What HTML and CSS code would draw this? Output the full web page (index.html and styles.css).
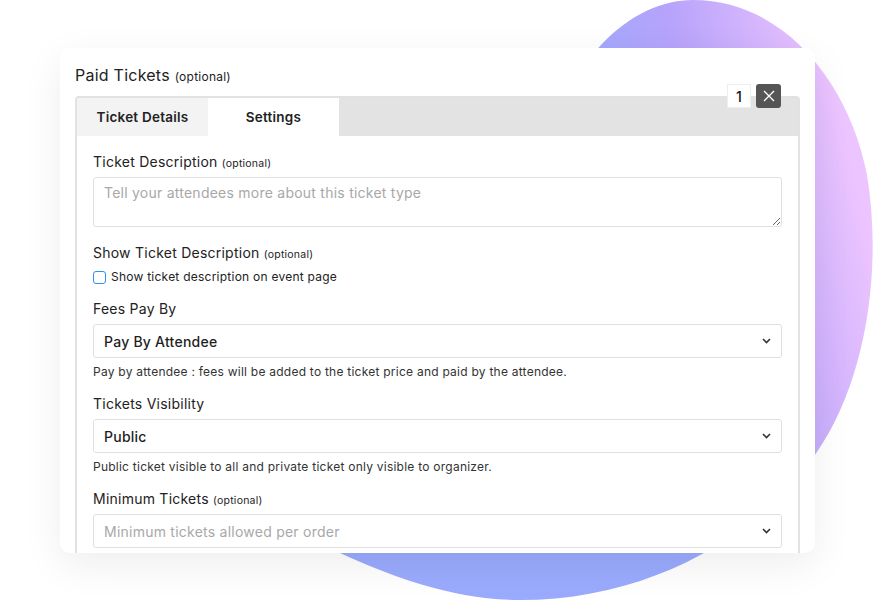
FILE: index.html
```html
<!DOCTYPE html>
<html lang="en">
<head>
    <meta charset="UTF-8">
    <meta name="viewport" content="width=device-width, initial-scale=1.0">
    <title>Paid Tickets</title>
    <link rel="stylesheet" href="styles.css">
</head>
<body>
    <svg class="blob" width="875" height="600" viewBox="0 0 875 600">
        <defs>
            <linearGradient id="blobFill" x1="620" y1="320" x2="875" y2="260" gradientUnits="userSpaceOnUse">
                <stop offset="0" stop-color="#9aaafd"/>
                <stop offset="0.45" stop-color="#b7a3fb"/>
                <stop offset="1" stop-color="#ecc4ff"/>
            </linearGradient>
        </defs>
        <path fill="url(#blobFill)" d="M693,0 C785,0 850,85 867,175 C882,265 868,380 815,455 C760,535 650,600 520,600 C455,600 395,578 340,553 L560,120 C575,60 630,0 693,0 Z"/>
    </svg>

    <div class="card">
        <h2 class="card-title">Paid Tickets <small>(optional)</small></h2>

        <div class="panel">
            <div class="panel-actions">
                <span class="count">1</span>
                <button class="close" type="button">
                    <svg width="12" height="12" viewBox="0 0 12 12"><path d="M1 1L11 11M11 1L1 11" stroke="#fff" stroke-width="1.4"/></svg>
                </button>
            </div>

            <div class="tabs">
                <div class="tab">Ticket Details</div>
                <div class="tab active">Settings</div>
            </div>

            <div class="panel-body">
                <div class="field">
                    <label>Ticket Description <small>(optional)</small></label>
                    <textarea class="control" placeholder="Tell your attendees more about this ticket type"></textarea>
                </div>

                <div class="field">
                    <label>Show Ticket Description <small>(optional)</small></label>
                    <div class="check-row">
                        <span class="checkbox"></span>
                        <span>Show ticket description on event page</span>
                    </div>
                </div>

                <div class="field">
                    <label>Fees Pay By</label>
                    <div class="control select">
                        <span>Pay By Attendee</span>
                        <svg width="9" height="6" viewBox="0 0 9 6"><path d="M1 1L4.5 4.5L8 1" fill="none" stroke="#333" stroke-width="1.6"/></svg>
                    </div>
                    <p class="help">Pay by attendee : fees will be added to the ticket price and paid by the attendee.</p>
                </div>

                <div class="field">
                    <label>Tickets Visibility</label>
                    <div class="control select">
                        <span>Public</span>
                        <svg width="9" height="6" viewBox="0 0 9 6"><path d="M1 1L4.5 4.5L8 1" fill="none" stroke="#333" stroke-width="1.6"/></svg>
                    </div>
                    <p class="help">Public ticket visible to all and private ticket only visible to organizer.</p>
                </div>

                <div class="field">
                    <label>Minimum Tickets <small>(optional)</small></label>
                    <div class="control select">
                        <span class="placeholder">Minimum tickets allowed per order</span>
                        <svg width="9" height="6" viewBox="0 0 9 6"><path d="M1 1L4.5 4.5L8 1" fill="none" stroke="#333" stroke-width="1.6"/></svg>
                    </div>
                </div>
            </div>
        </div>
    </div>
</body>
</html>
```

FILE: styles.css
```css
body {
    margin: 0;
    height: 600px;
    position: relative;
    overflow: hidden;
    background: #fff;
    font-family: Inter, "Open Sans", sans-serif;
    letter-spacing: 0.015em;
    color: #222;
}

.blob {
    position: absolute;
    top: 0;
    left: 0;
}

.card {
    position: relative;
    width: 755px;
    height: 505px;
    margin: 48px 0 0 60px;
    padding: 17px 15px 0;
    box-sizing: border-box;
    background: #fff;
    border-radius: 10px;
    box-shadow: 0 12px 40px rgba(0, 0, 0, 0.07);
    overflow: hidden;
}

.card-title {
    margin: 0 0 11px;
    font-size: 16px;
    line-height: 20px;
    font-weight: 400;
    color: #222;
}

.card-title small {
    font-size: 12px;
    line-height: 0;
}

.panel {
    position: relative;
    height: 600px;
    border: 2px solid #e2e2e2;
    border-bottom: none;
    border-radius: 4px 4px 0 0;
}

.panel-actions {
    position: absolute;
    top: -14px;
    right: 17px;
    display: flex;
    gap: 5px;
}

.count {
    width: 24px;
    height: 24px;
    background: #fff;
    border: 1px solid #eee;
    box-sizing: border-box;
    display: flex;
    align-items: center;
    justify-content: center;
    font-size: 14px;
    font-weight: 500;
    color: #111;
}

.close {
    width: 25px;
    height: 24px;
    padding: 0;
    border: none;
    border-radius: 3px;
    background: #555;
    display: flex;
    align-items: center;
    justify-content: center;
}

.tabs {
    display: flex;
    height: 38px;
    background: #e3e3e3;
}

.tab {
    width: 131px;
    display: flex;
    align-items: center;
    justify-content: center;
    font-size: 13.5px;
    font-weight: 600;
    color: #222;
    background: #f3f3f3;
}

.tab.active {
    background: #fff;
}

.panel-body {
    padding: 16px 16px 0;
}

.field {
    margin-bottom: 14px;
}

.field:first-child {
    margin-bottom: 16px;
}

label {
    display: block;
    margin-bottom: 5px;
    font-size: 14px;
    line-height: 20px;
    color: #222;
}

label small {
    font-size: 10.5px;
    line-height: 0;
}

.control {
    width: 100%;
    box-sizing: border-box;
    border: 1px solid #e0e0e0;
    border-radius: 3px;
    background: #fff;
    font-family: inherit;
    letter-spacing: inherit;
    font-size: 14px;
    color: #222;
}

textarea.control {
    display: block;
    height: 50px;
    padding: 6px 10px;
    resize: vertical;
}

textarea.control::placeholder,
.placeholder {
    color: #a8a8a8;
}

.select {
    height: 34px;
    padding: 0 10px;
    display: flex;
    align-items: center;
    justify-content: space-between;
    font-weight: 450;
    color: #1f1f1f;
}

.select .placeholder {
    font-weight: 400;
}

.check-row {
    display: flex;
    align-items: center;
    gap: 5px;
    margin-top: 6px;
    font-size: 12px;
    line-height: 16px;
}

.checkbox {
    width: 13px;
    height: 13px;
    box-sizing: border-box;
    border: 1px solid #2f8ff0;
    border-radius: 3px;
    background: #fff;
}

.help {
    margin: 6px 0 0;
    font-size: 12px;
    line-height: 16px;
    color: #333;
}
```
